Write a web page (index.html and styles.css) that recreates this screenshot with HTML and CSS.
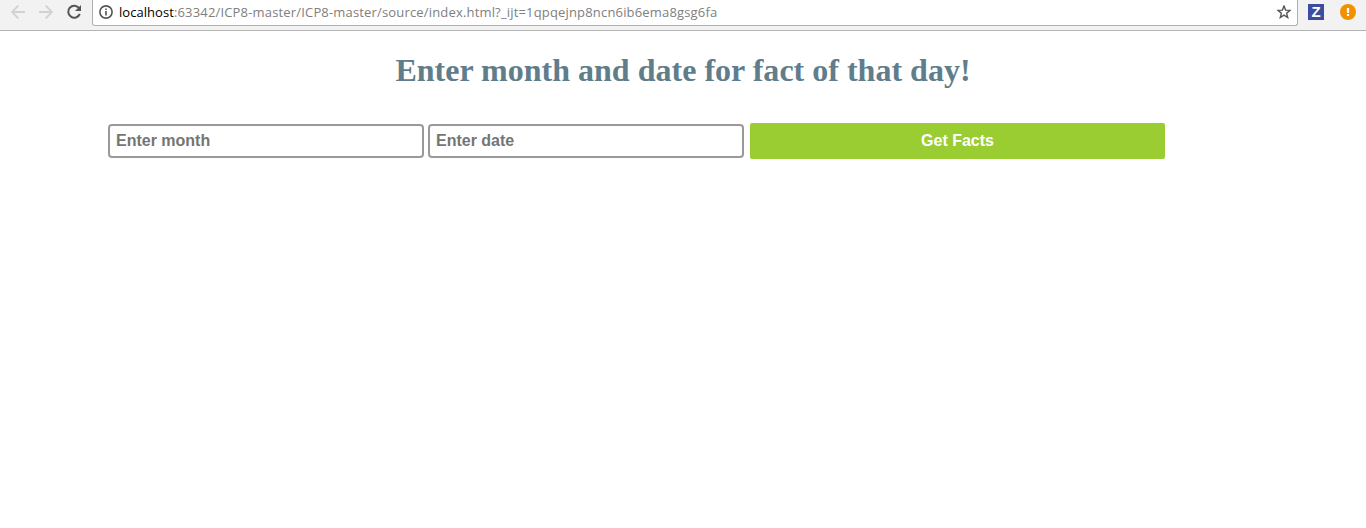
FILE: index.html
```html
<!DOCTYPE html>
<html lang="en">
<head>
<meta charset="utf-8">
<title>Facts</title>
<link rel="stylesheet" href="styles.css">
</head>
<body>
<header class="toolbar">
  <nav class="nav">
    <svg class="icon muted" viewBox="0 0 16 16"><path d="M15 8H2M8.3 1.7 2 8l6.3 6.3"/></svg>
    <svg class="icon muted" viewBox="0 0 16 16"><path d="M1 8h13M7.7 1.7 14 8l-6.3 6.3"/></svg>
    <svg class="icon reload" viewBox="0 0 16 16"><path d="M13.2 4.3A6 6 0 1 0 13.8 10"/><path class="solid" d="M15 1v6H9z"/></svg>
  </nav>
  <div class="omnibox">
    <svg class="info" viewBox="0 0 14 14"><circle cx="7" cy="7" r="6.1"/><path d="M7 6v4.4M7 3.4v1.7"/></svg>
    <span class="url"><span class="host">localhost</span>:63342/ICP8-master/ICP8-master/source/index.html?_ijt=1qpqejnp8ncn6ib6ema8gsg6fa</span>
    <svg class="star" viewBox="0 0 14 14"><path d="m7 1.1 1.6 4 4.3.3-3.3 2.8 1.1 4.3L7 10.1l-3.7 2.4 1.1-4.3L1.1 5.4l4.3-.3z"/></svg>
  </div>
  <span class="extension">Z</span>
  <svg class="alert" viewBox="0 0 16 16"><circle cx="8" cy="8" r="8"/><path d="M8 4v5M8 10v2"/></svg>
</header>
<main>
  <h1>Enter month and date for fact of that day!</h1>
  <form class="facts">
    <input class="field" type="text" placeholder="Enter month">
    <input class="field" type="text" placeholder="Enter date">
    <button class="submit" type="button">Get Facts</button>
  </form>
</main>
</body>
</html>
```

FILE: styles.css
```css
* { box-sizing: border-box; }
body { margin: 0; background: #fff; overflow: hidden; }
.toolbar { display: flex; align-items: flex-start; height: 31px; background: #f2f2f2; border-bottom: 1px solid #b4b4b4; }
.nav { display: flex; gap: 12px; width: 92px; padding: 4px 0 0 10px; }
.icon { width: 16px; height: 16px; fill: none; stroke: #555; stroke-width: 2; }
.muted { stroke: #d2d2d2; stroke-width: 1.8; }
.solid { fill: #555; stroke: none; }
.omnibox { display: flex; align-items: center; width: 1206px; height: 26px; padding: 0 6px 1px; background: #fff; border: 1px solid #b0b0b0; border-top: 0; border-radius: 0 0 3px 3px; }
.info { width: 14px; height: 14px; margin-right: 6px; fill: none; stroke: #555; stroke-width: 1.6; }
.url { flex: 1; font: 13px/20px "Open Sans", "Noto Sans", sans-serif; letter-spacing: 0.17px; color: #808080; white-space: nowrap; }
.host { color: #000; letter-spacing: 0.05px; }
.star { width: 14px; height: 14px; fill: none; stroke: #555; stroke-width: 1.4; }
.extension { width: 16px; height: 16px; margin: 4px 16px 0 10px; background: #3d4c9f; color: #fff; font: bold 15px/16px "Liberation Sans", sans-serif; text-align: center; }
.alert { width: 16px; height: 16px; margin-top: 4px; fill: #f29100; }
.alert path { stroke: #fff; stroke-width: 2.2; }
h1 { margin: 21px 0 0; font: bold 32px/37px "Liberation Serif", serif; letter-spacing: 0.01px; text-align: center; color: #607d8b; }
.facts { display: flex; align-items: center; margin: 34px 0 0 108px; }
.field { width: 316px; height: 34px; margin-right: 4px; padding: 0 6px; border: 2px solid #999; border-radius: 4px; background: #fff; font: bold 16px/18px "Liberation Sans", sans-serif; }
.field::placeholder { color: #757575; opacity: 1; }
.submit { width: 415px; height: 36px; margin-left: 2px; padding: 0; border: 0; border-radius: 2px; background: #9acd32; color: #fff; font: bold 16px/18px "Liberation Sans", sans-serif; }
```
